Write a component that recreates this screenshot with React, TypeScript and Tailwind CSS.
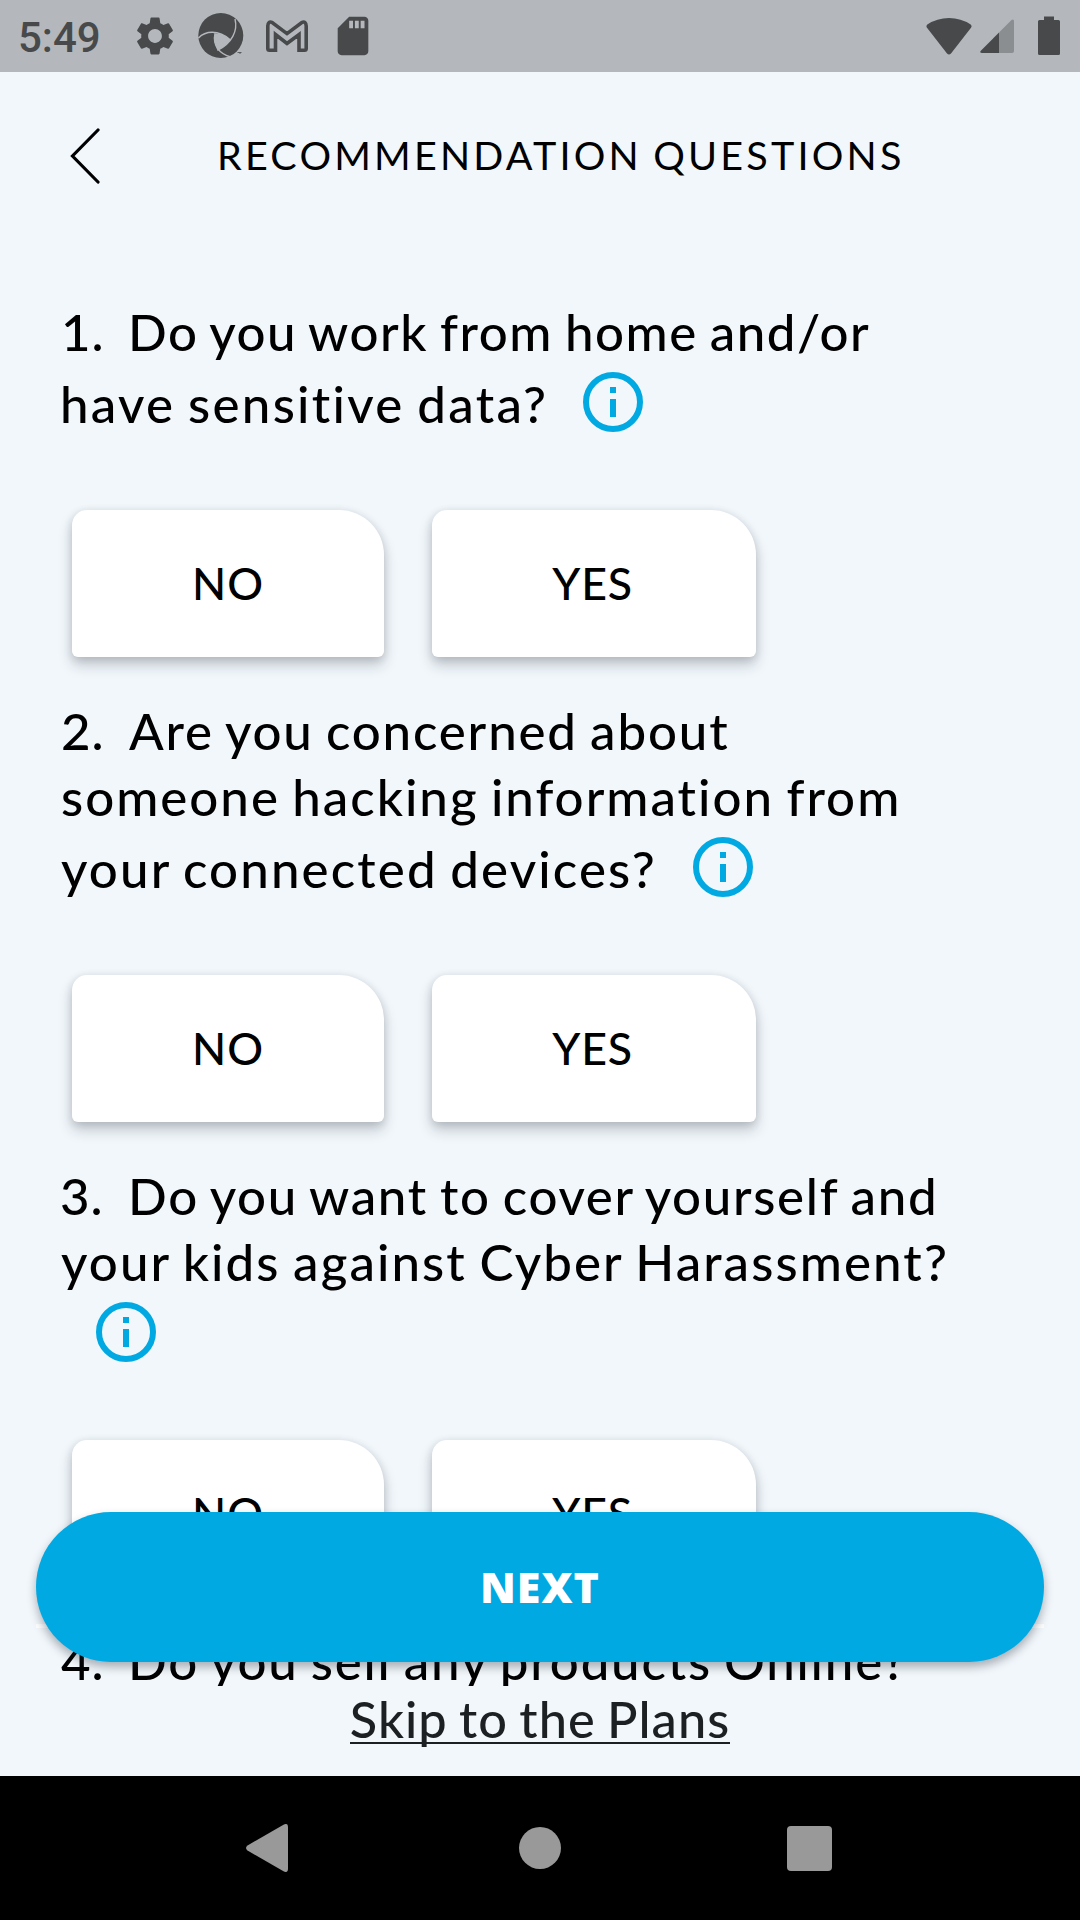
import { MdSdCard, MdSettings } from "react-icons/md";

function StatusBar() {
  return (
    <header className="flex h-[72px] shrink-0 items-center bg-[#b4b8bd] pl-[18px] pr-5 text-[#48494a]">
      <span className="w-[114px] pt-1 font-['Roboto'] text-[42px] font-medium leading-[72px]">5:49</span>
      <MdSettings className="size-[46px]" />
      <svg className="ml-[12px] h-[54px] w-[60px]" viewBox="0 0 60 54" fill="none">
        <circle cx="30.8" cy="26.5" r="22.5" fill="currentColor" />
        <path d="M25 24.500Q33 23.500 40.500 31Q36 37 27.500 41.500Q23 33 25 24.500Z" fill="#b4b8bd" />
        <path
          d="M8.500 29C15 22 28 20 40.500 31M45 10C48 22 42 34 27.500 41.500M25 24.500C22.500 36 29 45 41 48"
          stroke="#b4b8bd"
          strokeWidth="1.400"
        />
        <path d="M47.500 43.500h4M50 43.500v1.500" stroke="currentColor" strokeWidth=".8" />
      </svg>
      <svg className="ml-[14px] h-9 w-[46px]" viewBox="264 17 46 36" fill="none" stroke="currentColor" strokeWidth="3.600">
        <path d="M269.500 49.300Q267.800 49.300 267.800 47.600V25Q268 19.500 272.500 21.700L287 32.600L301.500 21.700Q306 19.500 306.200 25V47.600Q306.200 49.300 304.500 49.300H299V33.500L287 42.500L275.500 33.500V49.300Z" />
      </svg>
      <MdSdCard className="ml-5 size-[46px]" />
      <div className="flex-1" />
      <svg className="h-[40px] w-[46px]" viewBox="0 0 46 40" fill="currentColor">
        <path d="M1.300 8.500Q-.3 10.200 1 11.800L21 37.500Q23 39.500 25 37.500L45 11.800Q46.300 10.200 44.700 8.500Q35 2 23 2T1.300 8.500Z" />
      </svg>
      <svg className="ml-2 h-[38px] w-[35px]" viewBox="0 0 35 38">
        <path d="M19 15.500L31.500 3Q34 1.500 34 4.500V34Q34 36 32 36H19Z" fill="#8a8e90" />
        <path d="M19 15.500V36H2Q-.5 36 .6 34Z" fill="currentColor" />
      </svg>
      <svg className="ml-[23px] h-[40px] w-[22px]" viewBox="0 0 22 40" fill="currentColor">
        <path d="M6 4V0.500H16V4H20.500Q22 4 22 5.500V37.500Q22 39 20.500 39H1.500Q0 39 0 37.500V5.500Q0 4 1.500 4Z" />
      </svg>
    </header>
  );
}

function InfoIcon({ className }: { className: string }) {
  return (
    <svg className={`mt-[7px] size-[60px] shrink-0 ${className}`} viewBox="0 0 60 60">
      <circle cx="30" cy="30" r="27" fill="none" stroke="#00a9e2" strokeWidth="6" />
      <path d="M27 15h6v6h-6ZM27 27h6v18h-6Z" fill="#00a9e2" />
    </svg>
  );
}

function Answers() {
  return (
    <div className="mb-[41px] mt-[67px] flex gap-12 pl-3 text-[44.7px] leading-[147px] [word-spacing:0]">
      <button className="h-[147px] w-[312px] rounded-[6px] rounded-tl-[15px] rounded-tr-[45px] bg-white tracking-[1px] shadow-[0_8px_14px_rgba(30,35,50,0.22),0_2px_8px_rgba(30,35,50,0.14)]">
        NO
      </button>
      <button className="h-[147px] w-[324px] rounded-[6px] rounded-tl-[15px] rounded-tr-[45px] bg-white pr-[3px] tracking-[0.7px] shadow-[0_8px_14px_rgba(30,35,50,0.22),0_2px_8px_rgba(30,35,50,0.14)]">
        YES
      </button>
    </div>
  );
}

export default function App() {
  return (
    <div className="flex h-[1920px] w-[1080px] flex-col overflow-hidden bg-[#f1f7fb] font-['Lato',sans-serif] text-black">
      <StatusBar />
      <main className="relative h-[1614px] shrink-0 overflow-hidden">
        <div className="flex h-[227px] items-start pl-[70px] pt-[56px]">
          <svg className="h-[56px] w-[32px]" viewBox="0 0 32 56" fill="none" stroke="black" strokeWidth="3.200" strokeLinecap="round">
            <path d="M28 2L2.500 28L28 54" />
          </svg>
          <h1 className="-mt-px ml-[115px] whitespace-nowrap text-[39.5px] leading-[56px] tracking-[3.2px] [word-spacing:-2px]">
            RECOMMENDATION QUESTIONS
          </h1>
        </div>

        <div className="whitespace-nowrap pl-[60px] text-[51px] font-medium leading-[66px] [word-spacing:-2.5px]">
          <section>
            <div className="flex h-[66px]">
              <span className="w-[68px] pl-px tracking-[1px]">1.</span>
              <span className="tracking-[1.55px]">Do you work from home and/or</span>
            </div>
            <div className="flex h-[78px] leading-[78px]">
              <span className="w-[523px] tracking-[2.3px]">have sensitive data?</span>
              <InfoIcon className="" />
            </div>
            <Answers />
          </section>

          <section>
            <div className="flex h-[66px]">
              <span className="w-[69px] pl-px tracking-[1px]">2.</span>
              <span className="tracking-[1.85px]">Are you concerned about</span>
            </div>
            <div className="h-[66px] pl-px tracking-[2px]">someone hacking information from</div>
            <div className="flex h-[78px] leading-[78px]">
              <span className="ml-px w-[632px] tracking-[2.15px]">your connected devices?</span>
              <InfoIcon className="" />
            </div>
            <Answers />
          </section>

          <section>
            <div className="flex h-[66px]">
              <span className="w-[68px] tracking-[1px]">3.</span>
              <span className="tracking-[1.7px]">Do you want to cover yourself and</span>
            </div>
            <div className="ml-px h-[66px] tracking-[2.1px]">your kids against Cyber Harassment?</div>
            <div className="flex h-[78px]">
              <InfoIcon className="ml-9" />
            </div>
            <Answers />
          </section>

          <section className="flex h-[66px]">
            <span className="w-[68px] pl-px tracking-[1px]">4.</span>
            <span className="tracking-[1.8px]">Do you sell any products Online?</span>
          </section>
        </div>

        <div className="absolute bottom-[58px] left-9 h-1 w-[1008px] bg-white" />
        <button className="absolute bottom-6 left-9 h-[150px] w-[1008px] rounded-full bg-[#00a9e2] font-['Noto_Sans',sans-serif] text-[43px] font-black leading-[148px] tracking-[1px] text-white shadow-[0_5px_10px_rgba(30,35,50,0.35)]">
          NEXT
        </button>
      </main>

      <div className="flex h-[90px] shrink-0 justify-center bg-[#f1f7fb]">
        <a className="mt-[15px] h-[43px] whitespace-nowrap border-b-2 border-[#1d2022] text-[50.500px] font-medium leading-[36px] tracking-[1.05px] text-[#1d2022] [word-spacing:-2.5px]">
          Skip to the Plans
        </a>
      </div>

      <nav className="flex h-[144px] shrink-0 items-center bg-black pl-[246px]">
        <svg className="h-12 w-[42px]" viewBox="0 0 42 48" fill="#999">
          <path d="M37.500 .7Q42-1.500 42 3V45Q42 49.500 37.500 47.300L1.500 26.500Q-1.500 24 1.500 21.500Z" />
        </svg>
        <div className="ml-[231px] size-[42px] rounded-full bg-[#999]" />
        <div className="ml-[226px] size-[45px] rounded-[4px] bg-[#999]" />
      </nav>
    </div>
  );
}
